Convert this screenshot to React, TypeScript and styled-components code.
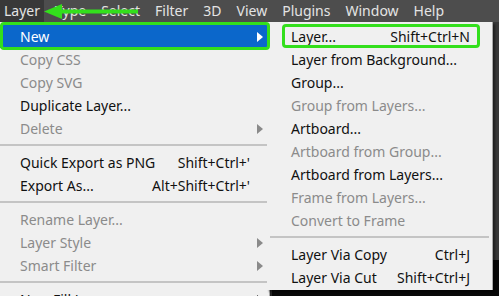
import styled, { createGlobalStyle } from 'styled-components';

const GlobalStyle = createGlobalStyle`
  html, body {
    margin: 0;
    padding: 0;
  }
  body {
    background: #2b2b2b;
    font-family: 'Noto Sans', 'Open Sans', sans-serif;
  }
`;

const GREEN = '#33df1c';

type Item = {
  label: string;
  shortcut?: string;
  disabled?: boolean;
  sub?: boolean;
  active?: boolean;
} | 'sep';

const barItems = ['Layer', 'Type', 'Select', 'Filter', '3D', 'View', 'Plugins', 'Window', 'Help'];

const layerMenu: Item[] = [
  { label: 'New', sub: true, active: true },
  { label: 'Copy CSS', disabled: true },
  { label: 'Copy SVG', disabled: true },
  { label: 'Duplicate Layer...' },
  { label: 'Delete', disabled: true, sub: true },
  'sep',
  { label: 'Quick Export as PNG', shortcut: "Shift+Ctrl+'" },
  { label: 'Export As...', shortcut: "Alt+Shift+Ctrl+'" },
  'sep',
  { label: 'Rename Layer...', disabled: true },
  { label: 'Layer Style', disabled: true, sub: true },
  { label: 'Smart Filter', disabled: true, sub: true },
  'sep',
  { label: 'New Fill Layer', sub: true },
];

const newMenu: Item[] = [
  { label: 'Layer...', shortcut: 'Shift+Ctrl+N' },
  { label: 'Layer from Background...' },
  { label: 'Group...' },
  { label: 'Group from Layers...', disabled: true },
  { label: 'Artboard...' },
  { label: 'Artboard from Group...', disabled: true },
  { label: 'Artboard from Layers...' },
  { label: 'Frame from Layers...', disabled: true },
  { label: 'Convert to Frame', disabled: true },
  'sep',
  { label: 'Layer Via Copy', shortcut: 'Ctrl+J' },
  { label: 'Layer Via Cut', shortcut: 'Shift+Ctrl+J' },
];

const Screen = styled.div`
  position: relative;
  width: 499px;
  height: 296px;
  overflow: hidden;
  display: flex;
  flex-direction: column;
`;

const MenuBar = styled.nav`
  height: 22px;
  flex-shrink: 0;
  display: flex;
  gap: 7px;
  background: #4d4d4d;
`;

const BarItem = styled.div<{ $active?: boolean }>`
  padding: 0 4px;
  line-height: 22px;
  font-size: 14px;
  color: #e4e4e4;
  background: ${({ $active }) => ($active ? '#383838' : 'transparent')};
`;

const Workspace = styled.div`
  flex: 1;
  display: flex;
  align-items: flex-end;
  padding-left: 272px;
  background: #383838;
`;

const Canvas = styled.div`
  flex: 1;
  height: 36px;
  background: #080808;
`;

const Menu = styled.div<{ $left: number; $width: number }>`
  position: absolute;
  top: 22px;
  left: ${({ $left }) => $left}px;
  width: ${({ $width }) => $width}px;
  box-sizing: border-box;
  padding: 3px 0 1px;
  background: #f0f0f0;
  border-right: 1px solid #a8a8a8;
  box-shadow: 2px 2px 2px rgba(0, 0, 0, 0.45);
`;

const Row = styled.div<{ $disabled?: boolean; $active?: boolean; $padL: number; $padR: number }>`
  position: relative;
  height: 23px;
  display: flex;
  align-items: center;
  padding: 0 ${({ $padR }) => $padR}px 0 ${({ $padL }) => $padL}px;
  font-size: 14px;
  white-space: nowrap;
  color: ${({ $disabled, $active }) => ($active ? '#ffffff' : $disabled ? '#8b8b8b' : '#111111')};
  background: ${({ $active }) => ($active ? '#0b67cb' : 'transparent')};
`;

const Label = styled.span`
  flex: 1;
`;

const Shortcut = styled.span`
  margin-left: 16px;
`;

const SubArrow = styled.svg`
  position: absolute;
  right: 6px;
  top: 7px;
`;

const Separator = styled.div<{ $inset: number }>`
  height: 2px;
  margin: 4px ${({ $inset }) => $inset}px 5px;
  background: #c4c4c4;
`;

const Highlight = styled.div<{ $x: number; $y: number; $w: number; $h: number }>`
  position: absolute;
  left: ${({ $x }) => $x}px;
  top: ${({ $y }) => $y}px;
  width: ${({ $w }) => $w}px;
  height: ${({ $h }) => $h}px;
  box-sizing: border-box;
  border: 3px solid ${GREEN};
  border-radius: 4px;
  pointer-events: none;
`;

const Pointer = styled.svg`
  position: absolute;
  left: 42px;
  top: 2px;
`;

const MenuList = ({ items, padL, padR, inset }: { items: Item[]; padL: number; padR: number; inset: number }) => (
  <>
    {items.map((it, i) =>
      it === 'sep' ? (
        <Separator key={i} $inset={inset} />
      ) : (
        <Row key={i} $disabled={it.disabled} $active={it.active} $padL={padL} $padR={padR}>
          <Label>{it.label}</Label>
          {it.shortcut && <Shortcut>{it.shortcut}</Shortcut>}
          {it.sub && (
            <SubArrow width='6' height='10' viewBox='0 0 6 10'>
              <polygon
                points='0,0 6,5 0,10'
                fill={it.active ? '#ffffff' : it.disabled ? '#8a8a8a' : '#111111'}
              />
            </SubArrow>
          )}
        </Row>
      )
    )}
  </>
);

const App = () => {
  return (
    <Screen>
      <GlobalStyle />
      <MenuBar>
        {barItems.map((b) => (
          <BarItem key={b} $active={b === 'Layer'}>
            {b}
          </BarItem>
        ))}
      </MenuBar>
      <Workspace>
        <Canvas />
      </Workspace>

      <Menu $left={0} $width={270}>
        <MenuList items={layerMenu} padL={20} padR={19} inset={0} />
      </Menu>

      <Menu $left={267} $width={226}>
        <MenuList items={newMenu} padL={24} padR={22} inset={3} />
      </Menu>

      <Highlight $x={0} $y={22} $w={270} $h={28} />
      <Highlight $x={282} $y={24} $w={198} $h={24} />

      <Pointer width='96' height='19' viewBox='0 0 96 19'>
        <rect x='14' y='7.5' width='82' height='4' fill={GREEN} />
        <polygon points='2,9.5 20,2 20,17' fill={GREEN} />
      </Pointer>
    </Screen>
  );
};

export default App;
